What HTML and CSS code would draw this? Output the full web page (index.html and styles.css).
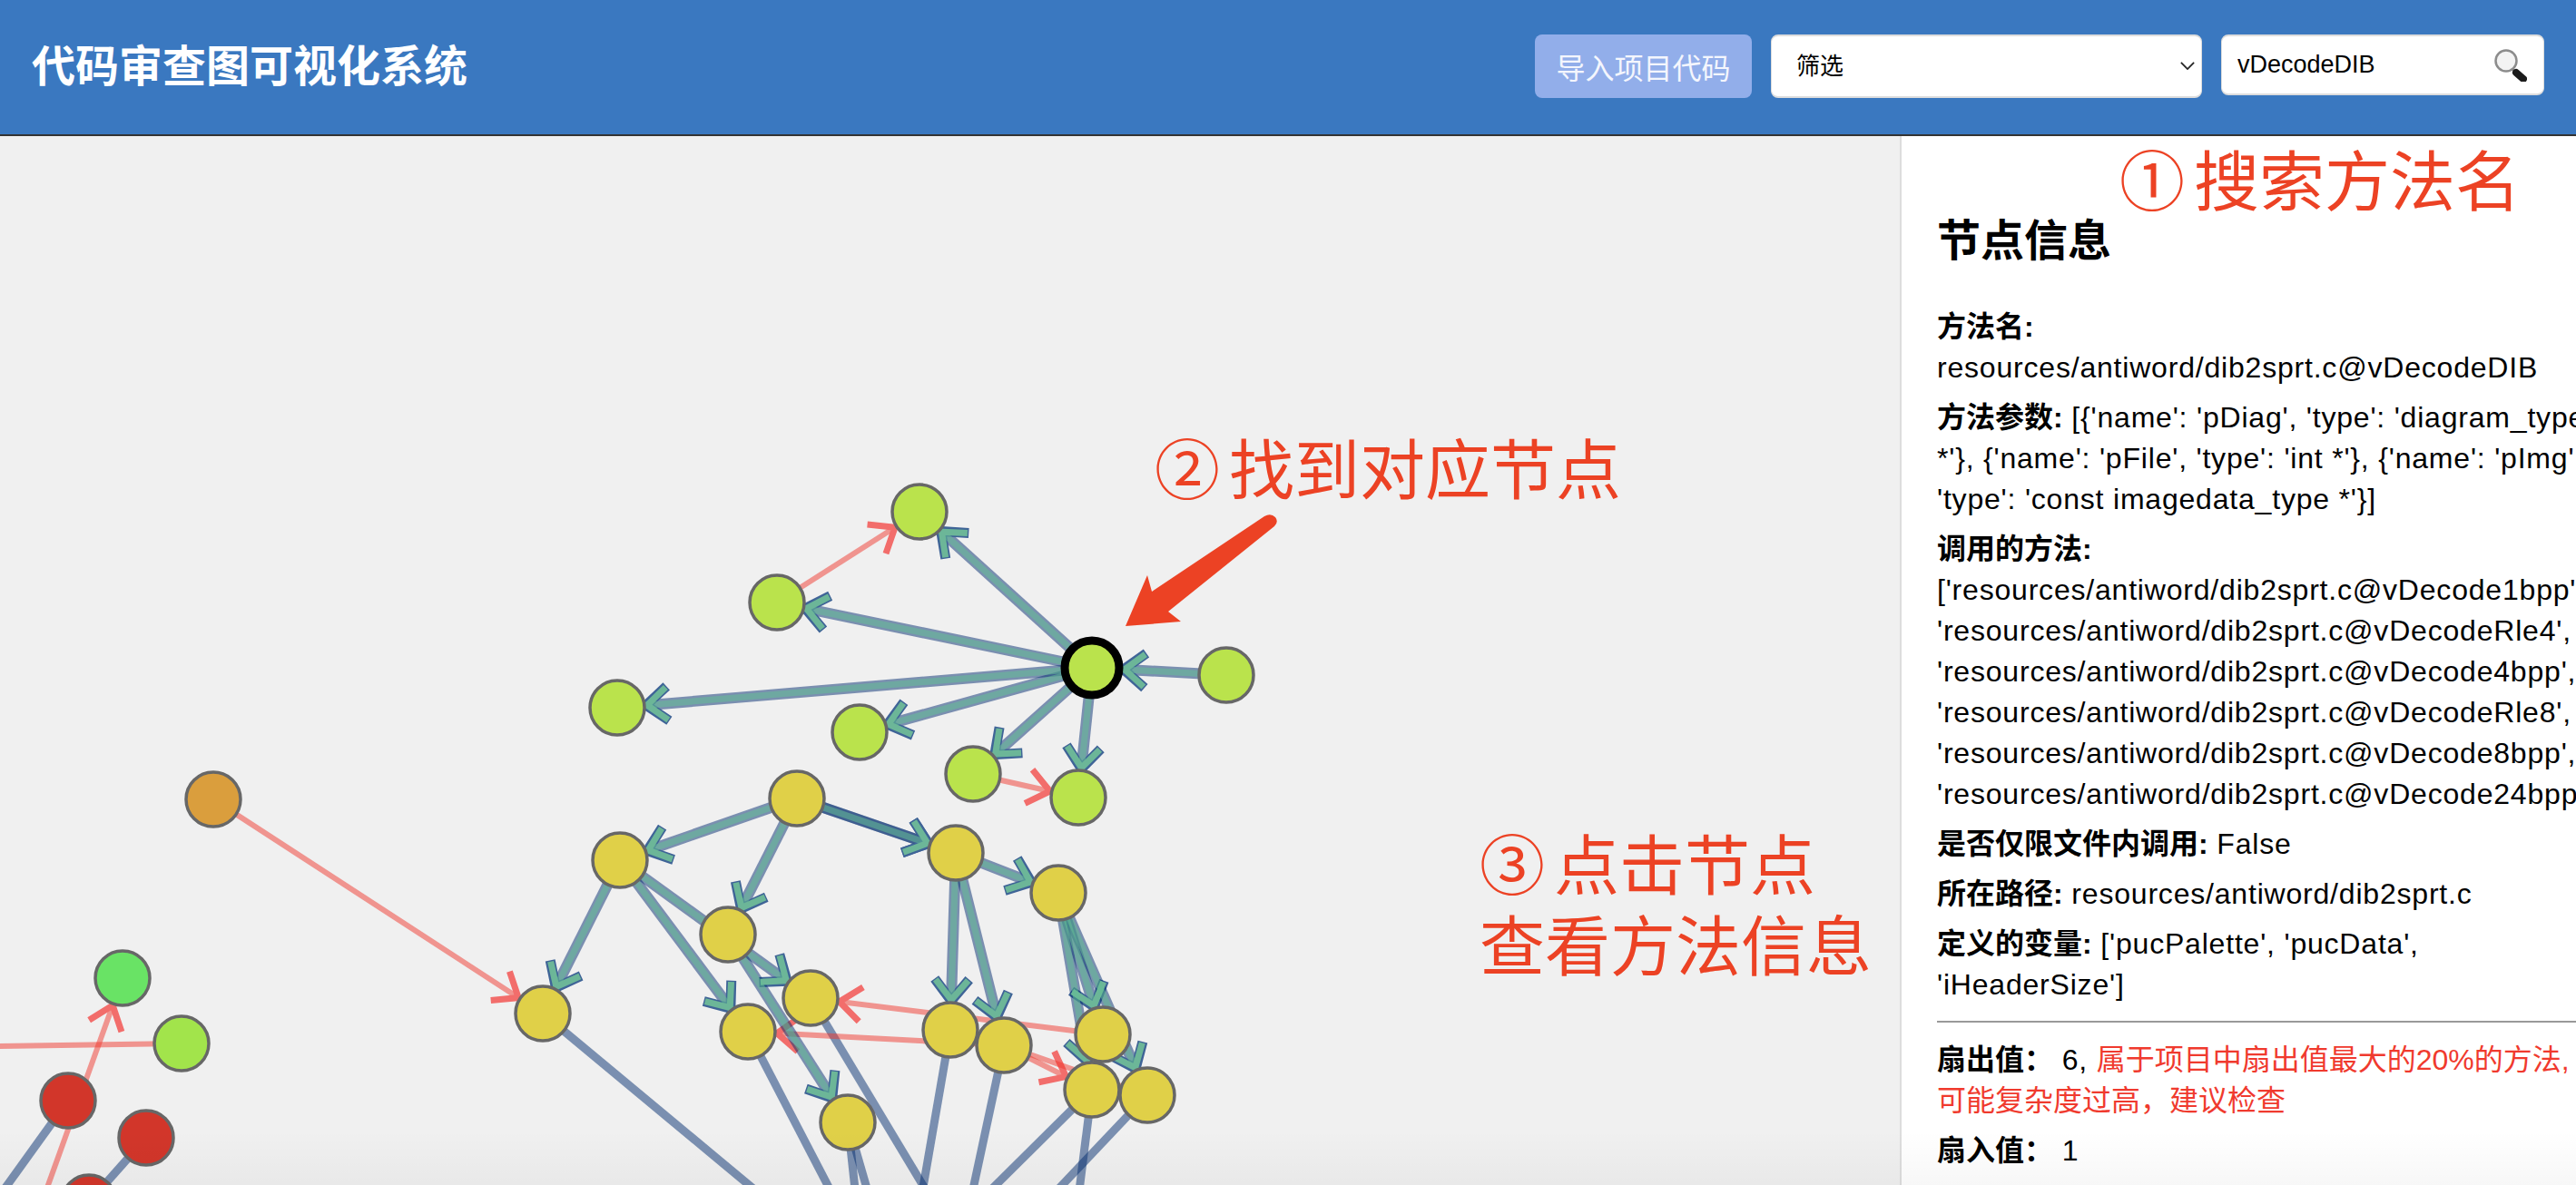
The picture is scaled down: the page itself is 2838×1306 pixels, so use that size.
FILE: index.html
```html
<!DOCTYPE html>
<html lang="zh-CN">
<head>
  <meta charset="UTF-8">
  <title>代码审查图可视化系统</title>
  <link rel="stylesheet" href="styles.css">
</head>
<body>
  <header class="topbar">
    <h1 class="title">代码审查图可视化系统</h1>
    <div class="controls">
      <button class="import-btn">导入项目代码</button>
      <div class="filter">
        <select class="filter-select">
          <option>筛选</option>
        </select>
        <svg class="filter-arrow" viewBox="0 0 18 10"><path d="M1 1 L9 9 L17 1"/></svg>
      </div>
      <div class="search">
        <input class="search-input" type="text" value="vDecodeDIB">
        <svg class="search-icon" viewBox="0 0 36 36">
          <path class="lens-neck" d="M19 21 L23 25"/>
          <path class="lens-handle" d="M24 26 L32 33"/>
          <circle class="lens" cx="13" cy="13" r="11.5"/>
        </svg>
      </div>
    </div>
  </header>

  <main class="content">
    <section class="graph">
      <svg class="graph-svg" viewBox="0 150 2093 1156">
        <defs>
          <marker id="head-blue" class="head" refX="32" refY="0" markerWidth="1" markerHeight="1" orient="auto" markerUnits="userSpaceOnUse" overflow="visible">
            <path class="head-blue" d="M-24 -19 L0 0 L-24 19"/>
          </marker>
          <marker id="head-teal" class="head" refX="32" refY="0" markerWidth="1" markerHeight="1" orient="auto" markerUnits="userSpaceOnUse" overflow="visible">
            <path class="head-teal" d="M-23 -18 L-1 0 L-23 18"/>
          </marker>
          <marker id="head-red" class="head" refX="32" refY="0" markerWidth="1" markerHeight="1" orient="auto" markerUnits="userSpaceOnUse" overflow="visible">
            <path class="head-red" d="M-24 -19 L0 0 L-24 19"/>
          </marker>
        </defs>

        <!-- plain calls, running off the bottom -->
        <g class="edge-plain">
          <line x1="598" y1="1117" x2="842" y2="1320"/>
          <line x1="824" y1="1137" x2="919" y2="1320"/>
          <line x1="893" y1="1100" x2="1025" y2="1320"/>
          <line x1="1047" y1="1135" x2="1015" y2="1320"/>
          <line x1="1106" y1="1152" x2="1070" y2="1320"/>
          <line x1="1203" y1="1201" x2="1083" y2="1320"/>
          <line x1="1203" y1="1201" x2="1188" y2="1320"/>
          <line x1="1264" y1="1207" x2="1157" y2="1320"/>
          <line x1="934" y1="1237" x2="943" y2="1320"/>
          <line x1="934" y1="1237" x2="958" y2="1320"/>
          <line x1="75" y1="1213" x2="-2" y2="1320"/>
          <line x1="161" y1="1254" x2="98" y2="1325"/>
        </g>

        <!-- cross-file calls -->
        <g class="edge-red">
          <line x1="200" y1="1150" x2="-5" y2="1153"/>
          <line x1="48" y1="1320" x2="135" y2="1078" marker-end="url(#head-red)"/>
          <line x1="856" y1="664" x2="1013" y2="564" marker-end="url(#head-red)"/>
          <line x1="1072" y1="853" x2="1188" y2="879" marker-end="url(#head-red)"/>
          <line x1="235" y1="881" x2="598" y2="1117" marker-end="url(#head-red)"/>
          <line x1="1215" y1="1140" x2="893" y2="1100" marker-end="url(#head-red)"/>
          <line x1="1106" y1="1152" x2="824" y2="1137" marker-end="url(#head-red)"/>
          <line x1="1106" y1="1152" x2="1203" y2="1201" marker-end="url(#head-red)"/>
          <line x1="1106" y1="1152" x2="1264" y2="1207"/>
        </g>

        <!-- calls on the highlighted path: wide stroke, then a teal one on top -->
        <g class="edge-wide" marker-end="url(#head-blue)">
          <line x1="1203" y1="736" x2="1013" y2="564"/>
          <line x1="1203" y1="736" x2="856" y2="664"/>
          <line x1="1203" y1="736" x2="680" y2="780"/>
          <line x1="1203" y1="736" x2="947" y2="807"/>
          <line x1="1203" y1="736" x2="1072" y2="853"/>
          <line x1="1203" y1="736" x2="1188" y2="879"/>
          <line x1="1351" y1="744" x2="1206" y2="736"/>
          <line x1="878" y1="880" x2="683" y2="948"/>
          <line x1="878" y1="880" x2="802" y2="1030"/>
          <line x1="878" y1="880" x2="1053" y2="940"/>
          <line x1="878" y1="880" x2="1053" y2="940"/>
          <line x1="683" y1="948" x2="598" y2="1117"/>
          <line x1="683" y1="948" x2="824" y2="1137"/>
          <line x1="683" y1="948" x2="893" y2="1100"/>
          <line x1="802" y1="1030" x2="934" y2="1237"/>
          <line x1="1053" y1="940" x2="1047" y2="1135"/>
          <line x1="1053" y1="940" x2="1106" y2="1152"/>
          <line x1="1053" y1="940" x2="1166" y2="984"/>
          <line x1="1166" y1="984" x2="1215" y2="1140"/>
          <line x1="1166" y1="984" x2="1203" y2="1201"/>
          <line x1="1166" y1="984" x2="1264" y2="1207"/>
        </g>
        <g class="edge-thin" marker-end="url(#head-teal)">
          <line x1="1203" y1="736" x2="1013" y2="564"/>
          <line x1="1203" y1="736" x2="856" y2="664"/>
          <line x1="1203" y1="736" x2="680" y2="780"/>
          <line x1="1203" y1="736" x2="947" y2="807"/>
          <line x1="1203" y1="736" x2="1072" y2="853"/>
          <line x1="1203" y1="736" x2="1188" y2="879"/>
          <line x1="1351" y1="744" x2="1206" y2="736"/>
          <line x1="878" y1="880" x2="683" y2="948"/>
          <line x1="878" y1="880" x2="802" y2="1030"/>
          <line x1="878" y1="880" x2="1053" y2="940"/>
          <line x1="683" y1="948" x2="598" y2="1117"/>
          <line x1="683" y1="948" x2="824" y2="1137"/>
          <line x1="683" y1="948" x2="893" y2="1100"/>
          <line x1="802" y1="1030" x2="934" y2="1237"/>
          <line x1="1053" y1="940" x2="1047" y2="1135"/>
          <line x1="1053" y1="940" x2="1106" y2="1152"/>
          <line x1="1053" y1="940" x2="1166" y2="984"/>
          <line x1="1166" y1="984" x2="1215" y2="1140"/>
          <line x1="1166" y1="984" x2="1203" y2="1201"/>
          <line x1="1166" y1="984" x2="1264" y2="1207"/>
        </g>

        <g class="node node-lime">
          <circle cx="1013" cy="564" r="30"/>
          <circle cx="856" cy="664" r="30"/>
          <circle cx="1351" cy="744" r="30"/>
          <circle cx="680" cy="780" r="30"/>
          <circle cx="947" cy="807" r="30"/>
          <circle cx="1072" cy="853" r="30"/>
          <circle cx="1188" cy="879" r="30"/>
        </g>
        <circle class="node-selected" cx="1203" cy="736" r="30"/>
        <g class="node node-yellow">
          <circle cx="878" cy="880" r="30"/>
          <circle cx="683" cy="948" r="30"/>
          <circle cx="802" cy="1030" r="30"/>
          <circle cx="1053" cy="940" r="30"/>
          <circle cx="1166" cy="984" r="30"/>
          <circle cx="598" cy="1117" r="30"/>
          <circle cx="824" cy="1137" r="30"/>
          <circle cx="893" cy="1100" r="30"/>
          <circle cx="1047" cy="1135" r="30"/>
          <circle cx="1106" cy="1152" r="30"/>
          <circle cx="1215" cy="1140" r="30"/>
          <circle cx="1203" cy="1201" r="30"/>
          <circle cx="1264" cy="1207" r="30"/>
          <circle cx="934" cy="1237" r="30"/>
        </g>
        <circle class="node node-orange" cx="235" cy="881" r="30"/>
        <circle class="node node-green" cx="135" cy="1078" r="30"/>
        <circle class="node node-grass" cx="200" cy="1150" r="30"/>
        <g class="node node-red">
          <circle cx="75" cy="1213" r="30"/>
          <circle cx="161" cy="1254" r="30"/>
          <circle cx="98" cy="1325" r="30"/>
        </g>

        <path class="pointer" d="M1240 690 L1264 634 L1269 652 L1393 569 Q1400 565 1405 570 Q1409 575 1404 580 L1287 674 L1301 685 Z"/>
      </svg>
    </section>

    <aside class="info">
      <h2 class="info-title">节点信息</h2>
      <p><b>方法名:</b> resources/antiword/dib2sprt.c@vDecodeDIB</p>
      <p><b>方法参数:</b> [{'name': 'pDiag', 'type': 'diagram_type *'}, {'name': 'pFile', 'type': 'int *'}, {'name': 'pImg', 'type': 'const imagedata_type *'}]</p>
      <p><b>调用的方法:</b> ['resources/antiword/dib2sprt.c@vDecode1bpp', 'resources/antiword/dib2sprt.c@vDecodeRle4', 'resources/antiword/dib2sprt.c@vDecode4bpp', 'resources/antiword/dib2sprt.c@vDecodeRle8', 'resources/antiword/dib2sprt.c@vDecode8bpp', 'resources/antiword/dib2sprt.c@vDecode24bpp']</p>
      <p><b>是否仅限文件内调用:</b> False</p>
      <p><b>所在路径:</b> resources/antiword/dib2sprt.c</p>
      <p><b>定义的变量:</b> ['pucPalette', 'pucData', 'iHeaderSize']</p>
      <hr class="divider">
      <p><b>扇出值：</b>&nbsp;6, <span class="warn">属于项目中扇出值最大的20%的方法,<br>可能复杂度过高，建议检查</span></p>
      <p><b>扇入值：</b>&nbsp;1</p>
      <p><b>被调用的方法:</b></p>
    </aside>
  </main>

  <div class="note note-search"><span class="note-num">①</span>搜索方法名</div>
  <div class="note note-find"><span class="note-num">②</span>找到对应节点</div>
  <div class="note note-click"><span class="note-num">③</span>点击节点<br>查看方法信息</div>
  <div class="bottom-fade"></div>
</body>
</html>
```

FILE: styles.css
```css
html, body {
  margin: 0;
  height: 100%;
  overflow: hidden;
}
body {
  position: relative;
  display: flex;
  flex-direction: column;
  font-family: "Liberation Sans", "Noto Sans CJK SC", sans-serif;
  background: #fff;
  color: #000;
}

.topbar {
  flex: none;
  box-sizing: border-box;
  height: 150px;
  display: flex;
  justify-content: space-between;
  padding: 38px 35px 0;
  background: #3a78c0;
  border-bottom: 2px solid #333;
}
.title {
  margin: 0;
  font-size: 48px;
  line-height: 72px;
  color: #fff;
}
.controls {
  display: flex;
  align-items: flex-start;
  gap: 21px;
}
.import-btn {
  width: 239px;
  height: 70px;
  padding: 0;
  border: none;
  border-radius: 8px;
  background: #92aeea;
  color: #f4f6fd;
  font: 32px "Liberation Sans", "Noto Sans CJK SC", sans-serif;
}
.filter {
  position: relative;
  width: 475px;
  height: 70px;
}
.filter-select {
  appearance: none;
  box-sizing: border-box;
  width: 100%;
  height: 100%;
  padding: 0 27px;
  border: 1px solid #ddd;
  border-width: 2px 1px;
  border-radius: 8px;
  background: #fff;
  color: #000;
  font: 26px "Liberation Sans", "Noto Sans CJK SC", sans-serif;
}
.filter-arrow {
  position: absolute;
  right: 8px;
  top: 30px;
  width: 16px;
  height: 9px;
  fill: none;
  stroke: #222;
  stroke-width: 2;
}
.search {
  position: relative;
  width: 356px;
  height: 67px;
}
.search-input {
  box-sizing: border-box;
  width: 100%;
  height: 100%;
  padding: 0 60px 0 17px;
  border: 1px solid #ddd;
  border-width: 2px 1px;
  border-radius: 8px;
  background: #fff;
  color: #000;
  font: 27px "Liberation Sans", sans-serif;
}
.search-icon {
  position: absolute;
  left: 301px;
  top: 16px;
  width: 36px;
  height: 36px;
}
.lens {
  fill: #f3f3f3;
  stroke: #8c8c8c;
  stroke-width: 2.5;
}
.lens-neck {
  stroke: #777;
  stroke-width: 3;
}
.lens-handle {
  stroke: #1c1c1c;
  stroke-width: 8;
  stroke-linecap: round;
}

.content {
  flex: 1;
  min-height: 0;
  display: flex;
}
.graph {
  flex: none;
  width: 2093px;
  background: #f0f0f0;
}
.graph-svg {
  display: block;
  width: 2093px;
  height: 1156px;
}

.head {
  overflow: visible;
}
.head path {
  fill: none;
  stroke-miterlimit: 3;
}
.head-blue {
  stroke: #3f6497;
  stroke-width: 11;
}
.head-teal {
  stroke: #6cb698;
  stroke-width: 7;
}
.head-red {
  stroke: #f26d6b;
  stroke-width: 7;
}
.edge-plain line {
  stroke: rgba(4, 46, 112, 0.5);
  stroke-width: 9;
}
.edge-wide line {
  stroke: rgba(4, 46, 112, 0.5);
  stroke-width: 12;
}
.edge-thin line {
  stroke: rgba(100, 190, 150, 0.55);
  stroke-width: 7;
}
.edge-red line {
  stroke: rgba(240, 56, 46, 0.5);
  stroke-width: 6;
}

.node circle,
circle.node {
  stroke: #676767;
  stroke-width: 3.5;
}
.node-selected {
  fill: #bae34c;
  stroke: #000;
  stroke-width: 9;
}
.node-lime circle { fill: #bae34c; }
.node-yellow circle { fill: #e0d048; }
.node-red circle { fill: #d2362a; }
circle.node-orange { fill: #da9e3d; }
circle.node-green { fill: #69e365; }
circle.node-grass { fill: #a2e44b; }
.pointer {
  fill: #ec4224;
}

.info {
  flex: none;
  box-sizing: border-box;
  width: 771px;
  padding: 0 0 0 39px;
  border-left: 2px solid #ddd;
  font-size: 32px;
  line-height: 45px;
}
.info-title {
  margin: 86px 0 42px;
  font-size: 48px;
  line-height: 60px;
}
.info p {
  margin: 0 0 10px;
  letter-spacing: 0.8px;
}
.info b,
.warn {
  letter-spacing: 0;
}
.warn {
  color: #f03a2e;
}
.divider {
  height: 2px;
  margin: 17px 0 19px;
  border: none;
  background: #999;
}

.note {
  position: absolute;
  color: #ec4224;
  font-family: "Noto Sans CJK SC", sans-serif;
  font-weight: 400;
  font-size: 72px;
  line-height: 89px;
  white-space: nowrap;
}
.note-num {
  margin-right: 10px;
}
.note-search {
  left: 2335px;
  top: 150px;
}
.note-find {
  left: 1272px;
  top: 468px;
}
.note-click {
  left: 1630px;
  top: 904px;
}
.bottom-fade {
  position: absolute;
  left: 0;
  right: 0;
  bottom: 0;
  height: 60px;
  background: linear-gradient(rgba(0, 0, 0, 0), rgba(0, 0, 0, 0.03));
  pointer-events: none;
}
```
